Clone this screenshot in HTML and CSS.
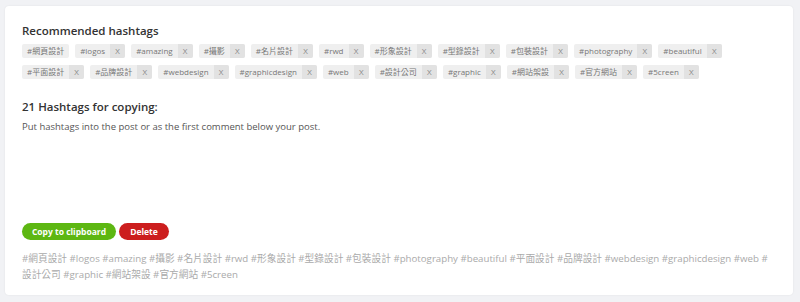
FILE: index.html
```html
<!DOCTYPE html>
<html>
<head>
<meta charset="utf-8">
<link rel="stylesheet" href="styles.css">
</head>
<body>
<div class="card">
  <h2 class="title">Recommended hashtags</h2>
  <div class="tags">
    <span class="tag"><span class="name">#網頁設計</span></span>
    <span class="tag"><span class="name">#logos</span><span class="x">X</span></span>
    <span class="tag"><span class="name">#amazing</span><span class="x">X</span></span>
    <span class="tag"><span class="name">#攝影</span><span class="x">X</span></span>
    <span class="tag"><span class="name">#名片設計</span><span class="x">X</span></span>
    <span class="tag"><span class="name">#rwd</span><span class="x">X</span></span>
    <span class="tag"><span class="name">#形象設計</span><span class="x">X</span></span>
    <span class="tag"><span class="name">#型錄設計</span><span class="x">X</span></span>
    <span class="tag"><span class="name">#包裝設計</span><span class="x">X</span></span>
    <span class="tag"><span class="name">#photography</span><span class="x">X</span></span>
    <span class="tag"><span class="name">#beautiful</span><span class="x">X</span></span>
    <span class="tag"><span class="name">#平面設計</span><span class="x">X</span></span>
    <span class="tag"><span class="name">#品牌設計</span><span class="x">X</span></span>
    <span class="tag"><span class="name">#webdesign</span><span class="x">X</span></span>
    <span class="tag"><span class="name">#graphicdesign</span><span class="x">X</span></span>
    <span class="tag"><span class="name">#web</span><span class="x">X</span></span>
    <span class="tag"><span class="name">#設計公司</span><span class="x">X</span></span>
    <span class="tag"><span class="name">#graphic</span><span class="x">X</span></span>
    <span class="tag"><span class="name">#網站架設</span><span class="x">X</span></span>
    <span class="tag"><span class="name">#官方網站</span><span class="x">X</span></span>
    <span class="tag"><span class="name">#5creen</span><span class="x">X</span></span>
  </div>
  <h2 class="title second">21 Hashtags for copying:</h2>
  <p class="hint">Put hashtags into the post or as the first comment below your post.</p>
  <div class="buttons">
    <button class="btn copy">Copy to clipboard</button>
    <button class="btn delete">Delete</button>
  </div>
  <p class="output">#網頁設計 #logos #amazing #攝影 #名片設計 #rwd #形象設計 #型錄設計 #包裝設計 #photography #beautiful #平面設計 #品牌設計 #webdesign #graphicdesign #web #設計公司 #graphic #網站架設 #官方網站 #5creen</p>
</div>
</body>
</html>
```
FILE: styles.css
```css
html, body {
  margin: 0;
  padding: 0;
}
body {
  background: #f1f2f5;
  font-family: "Open Sans", "Noto Sans CJK TC", sans-serif;
  padding: 6px 7px 7px 5px;
  height: 302px;
  box-sizing: border-box;
}
.card {
  background: #fff;
  border-radius: 4px;
  box-shadow: 0 0 2px rgba(0,0,0,0.08);
  height: 289px;
  box-sizing: border-box;
  padding: 17px 17px 0 17px;
}
.title {
  margin: 0;
  font-size: 11.5px;
  font-weight: 600;
  color: #333;
  line-height: 16px;
}
.tags {
  display: flex;
  flex-wrap: wrap;
  gap: 7px 6px;
  margin-top: 5px;
  width: 740px;
}
.tag {
  display: flex;
  height: 14px;
  background: #efefef;
  border-radius: 2px;
  font-size: 8px;
  color: #777;
  line-height: 14px;
  overflow: hidden;
  white-space: nowrap;
}
.name {
  padding: 0 5px 0 5px;
}
.x {
  background: #e2e2e2;
  width: 15px;
  text-align: center;
  color: #888;
}
.second {
  margin-top: 20px;
}
.hint {
  margin: 5px 0 0;
  font-size: 9.5px;
  color: #555;
  line-height: 13px;
}
.buttons {
  display: flex;
  gap: 3px;
  margin-top: 90px;
}
.btn {
  border: none;
  border-radius: 9px;
  height: 17px;
  padding: 0;
  font-family: "Open Sans", sans-serif;
  font-size: 8.5px;
  font-weight: 700;
  color: #fff;
  line-height: 17px;
  white-space: nowrap;
  text-align: center;
}
.copy {
  background: #5db712;
  width: 94px;
}
.delete {
  background: #cc1e1e;
  width: 50px;
}
.output {
  margin: 11px 0 0;
  font-size: 9.7px;
  line-height: 16px;
  color: #aaa;
}
```
